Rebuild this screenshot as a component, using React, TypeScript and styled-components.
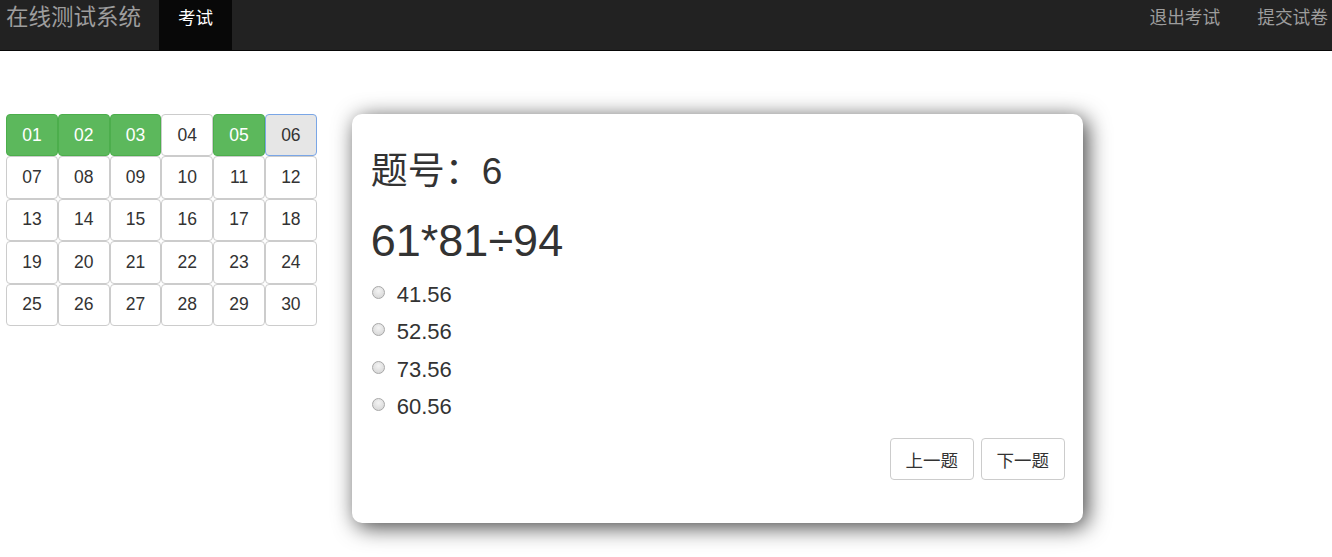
import React from "react";
import styled, { createGlobalStyle, css } from "styled-components";

const GlobalStyle = createGlobalStyle`
  * { box-sizing: border-box; }
  html, body {
    margin: 0;
    min-height: 100%;
  }
  body {
    font-family: "Liberation Sans", Arial, "Noto Sans CJK SC", sans-serif;
    color: #333;
    background: #fff;
  }
`;

const NavBar = styled.nav`
  display: flex;
  justify-content: space-between;
  align-items: stretch;
  height: 51px;
  background: #222;
  border-bottom: 1px solid #080808;
  font-family: "Liberation Sans", "Noto Sans CJK SC", sans-serif;
`;
const NavLeft = styled.div`
  display: flex;
  align-items: stretch;
`;
const Brand = styled.div`
  padding: 0 0 0 6px;
  margin-right: 18px;
  line-height: 36px;
  font-size: 22.5px;
  color: #9d9d9d;
`;
const Tab = styled.div<{ $active?: boolean }>`
  padding: 0 19px;
  line-height: 36px;
  font-size: 17.5px;
  color: #9d9d9d;
  ${(p) =>
    p.$active &&
    css`
      background: #080808;
      color: #fff;
    `}
`;
const NavRight = styled.div`
  display: flex;
  gap: 37px;
  padding-right: 4px;
`;
const NavLink = styled.div`
  line-height: 36px;
  font-size: 17.7px;
  color: #9d9d9d;
`;

const Main = styled.main`
  display: flex;
  align-items: flex-start;
  gap: 35px;
  padding: 63px 0 34px 6px;
`;

const Grid = styled.div`
  display: grid;
  grid-template-columns: repeat(6, 51.8px);
  grid-auto-rows: 42.4px;
`;
const Cell = styled.div<{ $state: "done" | "current" | "idle" }>`
  display: flex;
  align-items: center;
  justify-content: center;
  border: 1px solid #ccc;
  border-radius: 4px;
  background: #fff;
  font-size: 17.5px;
  color: #333;
  ${(p) =>
    p.$state === "done" &&
    css`
      background: #5cb85c;
      border-color: #4cae4c;
      color: #fff;
    `}
  ${(p) =>
    p.$state === "current" &&
    css`
      background: #e6e6e6;
      border-color: #7aa6e6;
    `}
`;

const Card = styled.section`
  width: 731px;
  height: 409px;
  padding: 37px 18px 43px 19px;
  border-radius: 10px;
  background: #fff;
  box-shadow: 4px 4px 22px rgba(0, 0, 0, 0.75);
  display: flex;
  flex-direction: column;
`;
const Title = styled.h2`
  margin: 0;
  font-size: 37px;
  font-weight: 400;
  line-height: 41px;
  font-family: "Liberation Sans", "Noto Sans CJK SC", sans-serif;
`;
const Expr = styled.h1`
  margin: 24px 0 10px;
  font-size: 45px;
  font-weight: 400;
  line-height: 50px;
`;
const Option = styled.label`
  display: flex;
  align-items: center;
  height: 37.7px;
  font-size: 22px;
`;
const Radio = styled.span`
  width: 13px;
  height: 13px;
  margin: -5px 12px 0 1px;
  border-radius: 50%;
  border: 1px solid #a8a8a8;
  background: radial-gradient(circle at 50% 35%, #f4f4f4 0%, #dcdcdc 70%, #cfcfcf 100%);
`;
const Actions = styled.div`
  display: flex;
  justify-content: flex-end;
  gap: 7px;
  margin-top: 12px;
`;
const Button = styled.button`
  width: 84px;
  height: 42px;
  border: 1px solid #ccc;
  border-radius: 4px;
  background: #fff;
  color: #333;
  font-size: 17.5px;
  font-family: "Liberation Sans", "Noto Sans CJK SC", sans-serif;
  padding: 0;
`;

const done = [1, 2, 3, 5];
const options = ["41.56", "52.56", "73.56", "60.56"];

const App = () => {
  return (
    <>
      <GlobalStyle />
      <NavBar>
        <NavLeft>
          <Brand>在线测试系统</Brand>
          <Tab $active>考试</Tab>
        </NavLeft>
        <NavRight>
          <NavLink>退出考试</NavLink>
          <NavLink>提交试卷</NavLink>
        </NavRight>
      </NavBar>
      <Main>
        <Grid>
          {Array.from({ length: 30 }, (_, i) => i + 1).map((n) => (
            <Cell key={n} $state={done.includes(n) ? "done" : n === 6 ? "current" : "idle"}>
              {String(n).padStart(2, "0")}
            </Cell>
          ))}
        </Grid>
        <Card>
          <Title>题号：6</Title>
          <Expr>61*81÷94</Expr>
          {options.map((o) => (
            <Option key={o}>
              <Radio />
              {o}
            </Option>
          ))}
          <Actions>
            <Button>上一题</Button>
            <Button>下一题</Button>
          </Actions>
        </Card>
      </Main>
    </>
  );
};

export default App;
